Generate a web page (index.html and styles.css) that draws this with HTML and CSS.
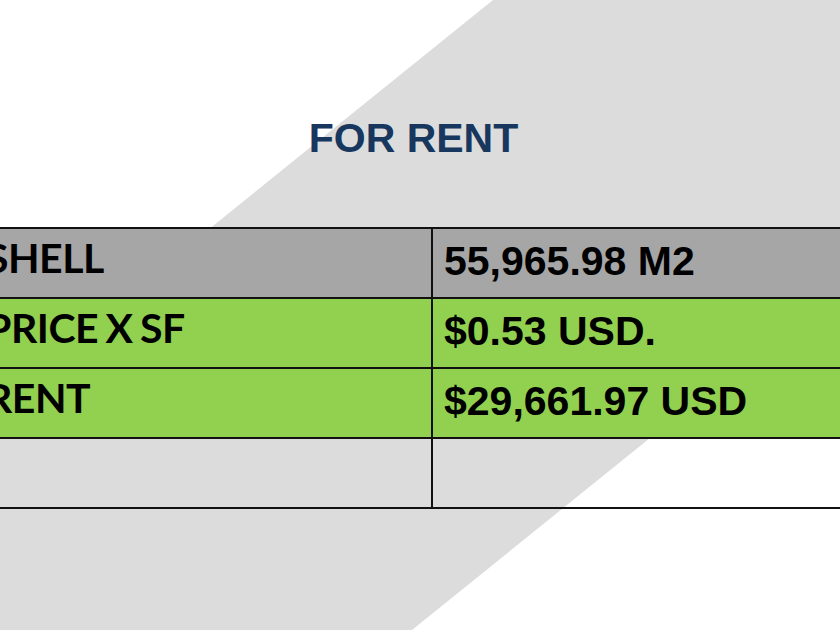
FILE: index.html
```html
<!DOCTYPE html>
<html>
<head>
<meta charset="utf-8">
<link rel="stylesheet" href="styles.css">
</head>
<body>
<div class="page">
  <div class="band"></div>
  <h1 class="title">FOR RENT</h1>
  <div class="grid">
    <div class="cell label gray">SHELL</div>
    <div class="cell value gray">55,965.98 M2</div>
    <div class="cell label green">PRICE X SF</div>
    <div class="cell value green">$0.53 USD.</div>
    <div class="cell label green">RENT</div>
    <div class="cell value green">$29,661.97 USD</div>
    <div class="cell label"></div>
    <div class="cell value"></div>
  </div>
</div>
</body>
</html>
```
FILE: styles.css
```css
html, body {
  margin: 0;
  padding: 0;
  background: #ffffff;
}
.page {
  position: relative;
  width: 840px;
  height: 630px;
  overflow: hidden;
  padding-top: 115px;
  box-sizing: border-box;
}
.band {
  position: absolute;
  left: 0;
  top: 0;
  width: 840px;
  height: 630px;
  background: #dcdcdc;
  clip-path: polygon(493px 0, 1193px 0, 412px 630px, -288px 630px);
  z-index: 0;
}
.title {
  position: relative;
  margin: 0 0 66px 0;
  padding-right: 13px;
  text-align: center;
  font-family: "Liberation Sans", Arial, sans-serif;
  font-weight: bold;
  font-size: 41px;
  line-height: 46px;
  color: #17375e;
}
.grid {
  position: relative;
  display: grid;
  grid-template-columns: 455px 450px;
  margin-left: -22px;
  border-top: 2px solid #111;
}
.cell {
  height: 68px;
  border-bottom: 2px solid #111;
  box-sizing: content-box;
  color: #000;
}
.label {
  border-right: 2px solid #111;
  padding-left: 8px;
  font-family: Lato, "Open Sans", sans-serif;
  font-weight: bold;
  font-size: 41px;
  line-height: 46px;
  letter-spacing: -0.5px;
  word-spacing: -2px;
  height: 68px;
}
.label.gray, .label.green {
  padding-top: 6px;
  height: 62px;
}
.value {
  padding-left: 11px;
  font-family: "Liberation Sans", Arial, sans-serif;
  font-weight: bold;
  font-size: 41px;
  line-height: 46px;
}
.value.gray, .value.green {
  padding-top: 9px;
  height: 59px;
}
.gray {
  background: #a6a6a6;
}
.green {
  background: #92d050;
}
```
